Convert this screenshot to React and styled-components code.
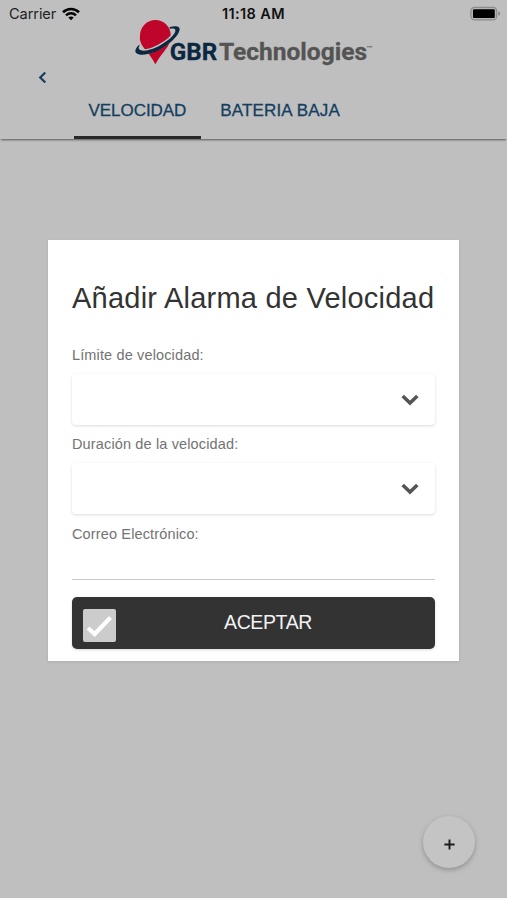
import React from 'react';
import styled, { createGlobalStyle } from 'styled-components';

const tabs = ['VELOCIDAD', 'BATERIA BAJA'];

function Logo() {
  return (
    <LogoArt viewBox="134 18 240 48" role="img" aria-label="GBR Technologies">
      <path
        d="M155.400 64.200C151.800 57 147 52 143 46.700A15.300 15.300 0 0 1 140 35.500C140.200 26.700 147 20 155.400 20C163.900 20 170.800 26.800 170.800 35.200C170.800 39.700 169.600 43.400 167.400 47C163.200 53 158.900 57.600 155.400 64.200Z"
        fill="#bf0529"
      />
      <path
        d="M139 51C148 54.500 171 43.500 177 30.500"
        fill="none"
        stroke="#bfbfbf"
        strokeWidth="5"
      />
      <path
        d="M169.300 27.300C174.500 25.400 180.300 25.800 179.600 29.700C178.600 36.500 166.500 47.500 154.200 52.300C144 56.200 134.500 55.500 135.400 50.300C135.800 48.200 137.700 46 140.200 44.300C138.700 46.500 137.900 49 140.300 50C144.600 52 153.600 49.300 161.900 44.300C170.500 39 176.500 32.800 175.300 29.800C174.700 28.100 172.200 28.200 169.900 28.700Z"
        fill="#0c2740"
      />
      <LogoText x="169.800" y="59.800" textLength="47.500" lengthAdjust="spacingAndGlyphs" fill="#0c2740" stroke="#0c2740">
        GBR
      </LogoText>
      <LogoText x="219" y="59.800" textLength="148" lengthAdjust="spacingAndGlyphs" fill="#545454" stroke="#545454">
        Technologies
      </LogoText>
      <TradeMark x="366.500" y="50" textLength="6" lengthAdjust="spacingAndGlyphs">™</TradeMark>
    </LogoArt>
  );
}

function StatusBar() {
  return (
    <Status>
      <Carrier>
        Carrier
        <svg width="18" height="14" viewBox="0 0 18 14" fill="none" stroke="#050505">
          <path d="M1 5.200C5.500 .9 12.500 .9 17 5.200" strokeWidth="2.600" />
          <path d="M4 8.300C6.800 5.600 11.200 5.600 14 8.300" strokeWidth="2.400" />
          <path d="M9 13.300L6.300 10.600C7.800 9.100 10.200 9.100 11.700 10.600Z" fill="#050505" stroke="none" />
        </svg>
      </Carrier>
      <Clock>11:18 AM</Clock>
      <svg width="31" height="16" viewBox="0 0 31 16">
        <rect x=".9" y="1.300" width="25.800" height="12.600" rx="3.600" fill="#b4b4b4" stroke="#8c8c8c" strokeWidth="1.200" />
        <rect x="3" y="3.200" width="21.800" height="8.800" rx="1" fill="#000" />
        <path d="M28.400 5.200C30.700 6 30.700 9 28.400 9.800Z" fill="#858585" />
      </svg>
    </Status>
  );
}

function SelectField({ label }) {
  return (
    <>
      <Label>{label}</Label>
      <Select type="button" aria-label={label}>
        <svg width="18" height="12" viewBox="0 0 18 12">
          <path d="M1.700 2L9 9L16.300 2" fill="none" stroke="#555" strokeWidth="3.600" />
        </svg>
      </Select>
    </>
  );
}

function AlarmDialog() {
  return (
    <Dialog role="dialog">
      <Title>Añadir Alarma de Velocidad</Title>
      <SelectField label="Límite de velocidad:" />
      <SelectField label="Duración de la velocidad:" />
      <Label>Correo Electrónico:</Label>
      <Input type="email" aria-label="Correo Electrónico" />
      <Accept type="button">
        <CheckBox>
          <svg width="33" height="33" viewBox="0 0 33 33">
            <path d="M5 19L11.700 25L27.500 8.500" fill="none" stroke="#fff" strokeWidth="4.200" />
          </svg>
        </CheckBox>
        <AcceptText>ACEPTAR</AcceptText>
      </Accept>
    </Dialog>
  );
}

export default function App() {
  return (
    <>
      <GlobalStyle />
      <Screen>
        <Header>
          <StatusBar />
          <Brand>
            <Logo />
          </Brand>
          <Nav>
            <Back type="button" aria-label="Volver">
              <svg width="9" height="13" viewBox="0 0 9 13">
                <path d="M7.300 1.500L2.200 6.500L7.300 11.500" fill="none" stroke="#153e60" strokeWidth="2.200" />
              </svg>
            </Back>
            <Tabs>
              {tabs.map((tab, i) => (
                <Tab key={tab} type="button" $active={i === 0}>
                  {tab}
                </Tab>
              ))}
            </Tabs>
          </Nav>
        </Header>
        <Content>
          <AlarmDialog />
        </Content>
        <AddButton type="button" aria-label="Añadir">
          <svg width="11" height="11" viewBox="0 0 11 11">
            <path d="M5.500 .4V10.600M.4 5.500H10.600" stroke="#1c1c1c" strokeWidth="1.900" />
          </svg>
        </AddButton>
      </Screen>
    </>
  );
}

const GlobalStyle = createGlobalStyle`
  * {
    box-sizing: border-box;
  }

  body {
    margin: 0;
    background: #fafafa;
    font-family: 'Liberation Sans', Arial, sans-serif;
  }

  button,
  input {
    border: 0;
    margin: 0;
    padding: 0;
    font-family: inherit;
  }

  svg {
    display: block;
  }
`;

const Screen = styled.div`
  position: relative;
  display: flex;
  flex-direction: column;
  width: 507px;
  height: 898px;
  background: #bfbfbf;
  overflow: hidden;
`;

const Header = styled.header`
  height: 139px;
  box-shadow: 0 2px 2px -1px rgba(0, 0, 0, 0.55);
`;

const Status = styled.div`
  display: grid;
  grid-template-columns: 1fr auto 1fr;
  align-items: center;
  height: 18px;
  padding: 8px 6px 0 9px;
  margin: -3px 0 3px;

  > svg {
    justify-self: end;
  }
`;

const Carrier = styled.div`
  display: flex;
  align-items: center;
  gap: 6px;
  font: 14.6px/18px Inter, sans-serif;
  letter-spacing: -0.1px;
  color: #222;

  svg {
    margin-top: -1px;
  }
`;

const Clock = styled.div`
  margin-left: -3px;
  font: 600 14.5px/18px Inter, sans-serif;
  letter-spacing: 0.4px;
  color: #111;
`;

const Brand = styled.div`
  display: flex;
  justify-content: center;
  height: 48px;
`;

const LogoArt = styled.svg`
  width: 240px;
  height: 48px;
`;

const LogoText = styled.text`
  font: 700 24.5px Roboto, sans-serif;
  stroke-width: 0.3px;
`;

const TradeMark = styled.text`
  font: 700 6px Roboto, sans-serif;
  fill: #545454;
`;

const Nav = styled.nav`
  display: flex;
  height: 73px;
`;

const Back = styled.button`
  display: flex;
  align-items: flex-start;
  width: 74px;
  padding: 5px 0 0 38px;
  background: none;
`;

const Tabs = styled.div`
  display: flex;
  align-items: flex-end;
  gap: 5px;
`;

const Tab = styled.button`
  height: 58px;
  padding: 5px 14.5px 0;
  border-bottom: 3px solid ${({ $active }) => ($active ? '#292929' : 'transparent')};
  background: none;
  color: #153e60;
  font-size: 17px;
  letter-spacing: ${({ $active }) => ($active ? '-0.05px' : '0.15px')};
  -webkit-text-stroke: 0.3px #153e60;
`;

const Content = styled.main`
  display: flex;
  flex: 1;
  align-items: flex-start;
  justify-content: center;
  padding-top: 101px;
`;

const Dialog = styled.section`
  display: flex;
  flex-direction: column;
  width: 411px;
  height: 421px;
  padding: 41px 24px 0;
  background: #fff;
  box-shadow: 0 1px 3px rgba(0, 0, 0, 0.1);
`;

const Title = styled.h1`
  margin: 0 0 32px;
  font-size: 29px;
  font-weight: 400;
  line-height: 34px;
  letter-spacing: 0.23px;
  white-space: nowrap;
  color: #333;
`;

const Label = styled.label`
  height: 17px;
  font-size: 14.5px;
  line-height: 17px;
  letter-spacing: 0.14px;
  color: #737373;
`;

const Select = styled.button`
  display: flex;
  align-items: center;
  justify-content: flex-end;
  flex: none;
  height: 51px;
  margin: 10px 0 11.4px;
  padding-right: 16px;
  border-radius: 4px;
  background: #fff;
  box-shadow: 0 1px 3px rgba(0, 0, 0, 0.15);
`;

const Input = styled.input`
  height: 37px;
  border-bottom: 1px solid #c8c8c8;
  outline: 0;
`;

const Accept = styled.button`
  display: grid;
  grid-template-columns: 32px 1fr 32px;
  align-items: center;
  height: 52px;
  margin-top: 17px;
  padding: 0 11px;
  border-radius: 5px;
  background: #333;
  box-shadow: 0 1px 3px rgba(0, 0, 0, 0.15);
`;

const CheckBox = styled.span`
  width: 33px;
  height: 33px;
  margin-top: 5px;
  border-radius: 2px;
  background: #ccc;
`;

const AcceptText = styled.span`
  margin-left: 29px;
  font-size: 19.5px;
  letter-spacing: -0.4px;
  color: #f2f2f2;
`;

const AddButton = styled.button`
  position: absolute;
  right: 32px;
  bottom: 30px;
  display: flex;
  align-items: center;
  justify-content: center;
  width: 52px;
  height: 52px;
  padding-top: 5px;
  border-radius: 50%;
  background: #c4c4c4;
  box-shadow: 0 2px 5px rgba(0, 0, 0, 0.25);
`;
